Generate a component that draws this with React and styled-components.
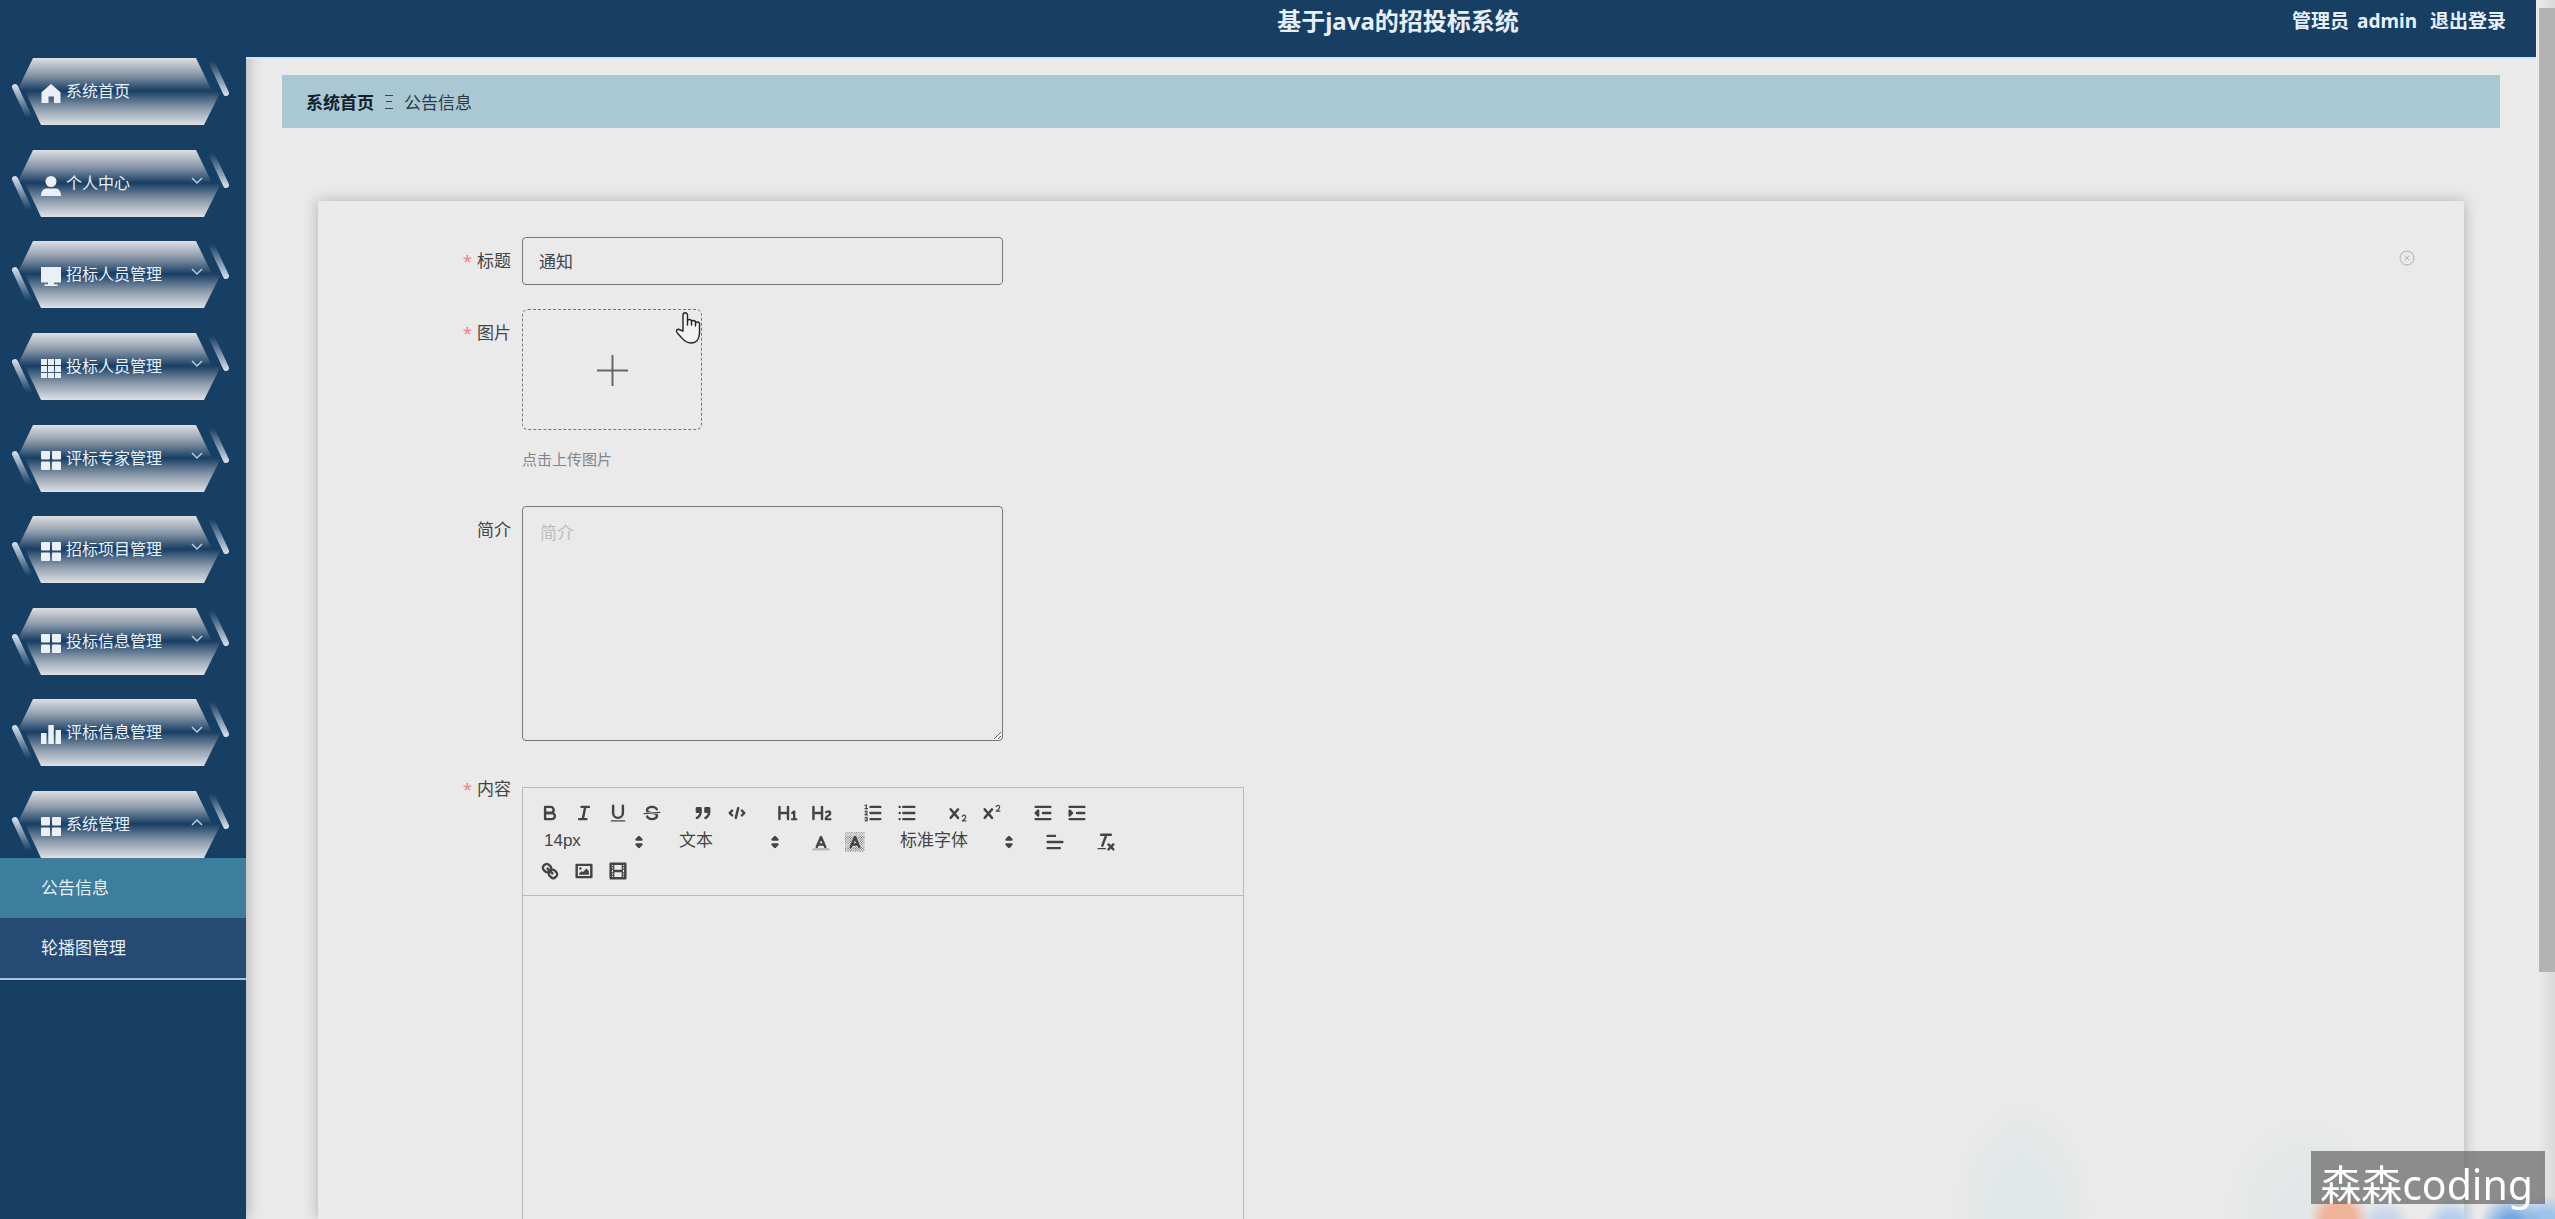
import React, { useState } from "react";
import styled, { createGlobalStyle, css } from "styled-components";

const navy = "#173e63";
const paper = "#eaeaea";
const ink = "#444";
const sans = `"Noto Sans", "Noto Sans CJK SC", sans-serif`;

const GlobalStyle = createGlobalStyle`
  *, *::before, *::after { box-sizing: border-box; }
  body { margin: 0; background: ${paper}; font-family: ${sans}; color: ${ink}; }
  button, input, textarea, select { font: inherit; color: inherit; }
  button { padding: 0; border: 0; background: none; cursor: pointer; }
`;

/* ---------- frame ---------- */

const Shell = styled.div`
  display: flex;
  height: 100vh;
  overflow: hidden;
`;

const Sidebar = styled.aside`
  flex: none;
  width: 246px;
  padding-top: 57px;
  background: ${navy};
  box-shadow: 0 0 16px rgba(0, 0, 0, 0.3);
  z-index: 1;
`;

const Page = styled.div`
  flex: 1;
  min-width: 0;
  display: flex;
  flex-direction: column;
`;

const Header = styled.header`
  flex: none;
  position: relative;
  z-index: 2;
  display: grid;
  grid-template-columns: 1fr auto 1fr;
  align-items: start;
  height: 59px;
  padding: 3px 30px 0 44px;
  border-bottom: 2px solid #d5e5f6;
  background: ${navy};
  color: #e6effa;
`;

const SiteTitle = styled.h1`
  grid-column: 2;
  margin: 0;
  font-size: 24px;
  line-height: 36px;
  font-weight: 700;
`;

const Account = styled.div`
  display: flex;
  justify-content: flex-end;
  font-size: 19px;
  line-height: 36px;
  font-weight: 700;
`;

const UserName = styled.span`
  margin: 0 13px 0 8px;
`;

const LogoutLink = styled.a`
  color: inherit;
  text-decoration: none;
`;

const Rail = styled.div`
  flex: none;
  width: 19px;
  padding: 8px 0 0 3px;
  background: linear-gradient(90deg, #ececec, #dadada);
`;

const RailThumb = styled.div`
  height: calc(80% - 5px);
  background: #b3b3b3;
`;

/* ---------- sidebar menu ---------- */

const Menu = styled.nav`
  display: flex;
  flex-direction: column;
  justify-content: space-between;
  height: 801px;
`;

const MenuButton = styled.button`
  position: relative;
  display: flex;
  align-items: center;
  width: 100%;
  height: 68px;
  padding: 0 43px 0 41px;
  color: #eaf1fa;
  font-size: 16px;
  text-align: left;
`;

const Plate = styled.svg`
  position: absolute;
  inset: 0;
  width: 246px;
  height: 68px;
`;

const MenuIcon = styled.svg`
  position: relative;
  flex: none;
  width: 20px;
  height: 20px;
  margin-top: 6px;
  fill: #eaf0f6;
`;

const MenuText = styled.span`
  position: relative;
  flex: 1;
  padding: 0 0 0 5px;
  line-height: 24px;
`;

const Chevron = styled.svg`
  position: relative;
  flex: none;
  width: 12px;
  height: 8px;
  margin-bottom: 4px;
  fill: none;
  stroke: #b9cbe0;
  stroke-width: 1.5;
  transform: ${(p) => (p.$open ? "rotate(180deg)" : "none")};
`;

const SubMenu = styled.div`
  display: flex;
  flex-direction: column;
  border-bottom: 2px solid #a9c3dc;
`;

const SubLink = styled.a`
  height: 60px;
  padding-left: 41px;
  background: ${(p) => (p.$active ? "#3d7d9d" : "#254b75")};
  color: #e8f0f8;
  font-size: 17px;
  line-height: 60px;
  text-decoration: none;
`;

/* ---------- content ---------- */

const Main = styled.main`
  flex: 1;
  display: flex;
  flex-direction: column;
  min-height: 0;
  padding: 16px 36px 0;
`;

const Crumbs = styled.nav`
  flex: none;
  display: flex;
  align-items: center;
  gap: 11px;
  height: 53px;
  padding: 0 24px;
  background: #a9c8d4;
  color: #2c3a44;
  font-size: 17px;
`;

const CrumbLink = styled.a`
  color: #10202c;
  font-weight: 700;
  text-decoration: none;
`;

const CrumbMark = styled.svg`
  width: 8px;
  height: 14px;
  stroke: #34444e;
  stroke-width: 1;
`;

const Card = styled.form`
  flex: 1;
  display: flex;
  flex-direction: column;
  gap: 24px;
  min-height: 0;
  margin: 73px 36px 0;
  padding: 36px 49px 0 0;
  background: ${paper};
  box-shadow: 0 0 14px rgba(0, 0, 0, 0.25);
`;

const Row = styled.div`
  display: flex;
  align-items: flex-start;
  flex: ${(p) => (p.$grow ? "1" : "none")};
  min-height: 0;
`;

const Label = styled.label`
  flex: none;
  width: 204px;
  padding-right: 11px;
  font-size: 17px;
  line-height: 48px;
  text-align: right;
  ${(p) =>
    p.$required &&
    css`
      &::before {
        content: "*";
        margin-right: 5px;
        color: #f07f8c;
      }
    `}
`;

const fieldBox = css`
  display: block;
  width: 481px;
  border: 1px solid #777;
  border-radius: 4px;
  background: transparent;
  outline: none;
  font-size: 17px;
`;

const TextField = styled.input`
  ${fieldBox}
  height: 48px;
  padding: 0 16px 2px;
`;

const TextArea = styled.textarea`
  ${fieldBox}
  height: 235px;
  padding: 14px 17px;
  line-height: 24px;
  resize: both;
  &::placeholder { color: #bdbdbd; }
`;

const ClearButton = styled.button`
  display: flex;
  margin: 13px 0 0 auto;
  svg { width: 16px; height: 16px; fill: none; stroke: #b0b0b0; }
`;

const UploadButton = styled.button`
  position: relative;
  display: flex;
  align-items: center;
  justify-content: center;
  width: 180px;
  height: 121px;
  padding-top: 2px;
  border: 1px dashed #777;
  border-radius: 6px;
`;

const PlusIcon = styled.svg`
  width: 31px;
  height: 31px;
  stroke: #666;
  stroke-width: 2;
`;

const HandPointer = styled.svg`
  position: absolute;
  left: 152px;
  top: 1px;
  width: 26px;
  height: 34px;
  fill: #f2f2f2;
  stroke: #222;
  stroke-width: 1.4;
  stroke-linejoin: round;
  stroke-linecap: round;
`;

const Hint = styled.p`
  margin: 15px 0 9px;
  color: #85858c;
  font-size: 15px;
  line-height: 28px;
`;

/* ---------- rich text editor ---------- */

const Editor = styled.div`
  align-self: stretch;
  display: flex;
  flex-direction: column;
  width: 722px;
  margin-top: 22px;
  border: 1px solid #bcbcbc;
  border-bottom: 0;
`;

const Toolbar = styled.div`
  display: flex;
  flex-wrap: wrap;
  padding: 10px;
  border-bottom: 1px solid #bcbcbc;
`;

const ToolGroup = styled.div`
  display: flex;
  height: 29px;
  margin-right: 17px;
`;

const ToolButton = styled.button`
  display: flex;
  align-items: center;
  justify-content: center;
  width: 34px;
  height: 29px;
`;

const Glyph = styled.svg`
  width: 22px;
  height: 22px;
  fill: none;
  stroke: ${ink};
  stroke-width: 2;
  stroke-linecap: round;
  stroke-linejoin: round;
  .thin { stroke-width: 1; }
  .fill { fill: ${ink}; stroke: none; }
  .both { fill: ${ink}; }
  .faint { stroke: #bbb; }
`;

const Picker = styled.div`
  position: relative;
  width: ${(p) => p.$width}px;
  height: 29px;
  svg {
    position: absolute;
    right: 1px;
    top: 4px;
    pointer-events: none;
  }
`;

const PickerSelect = styled.select`
  width: 100%;
  height: 27px;
  padding: 0 0 0 11px;
  border: 0;
  background: transparent;
  appearance: none;
  outline: none;
  font-family: "Liberation Sans", "Noto Sans CJK SC", sans-serif;
  font-size: 17px;
  line-height: 27px;
`;

const Writing = styled.div`
  flex: 1;
  min-height: 240px;
  padding: 14px 18px;
  outline: none;
`;

/* ---------- overlays ---------- */

const DockGlow = styled.div`
  position: fixed;
  right: 0;
  bottom: 0;
  width: 660px;
  height: 130px;
  z-index: 3;
  pointer-events: none;
  background:
    radial-gradient(circle 30px at 444px 130px, #efb39a 50%, transparent),
    radial-gradient(circle 26px at 490px 136px, #c8d5ea 40%, transparent),
    radial-gradient(circle 26px at 556px 136px, #b5cfec 40%, transparent),
    radial-gradient(circle 32px at 616px 136px, #74a9e2 30%, transparent),
    radial-gradient(circle 28px at 650px 134px, #9cc3ec 40%, transparent),
    radial-gradient(ellipse 70px 116px at 128px 130px, #e2e7e7 55%, transparent),
    radial-gradient(ellipse 80px 100px at 410px 130px, #e3e7e7 40%, transparent);
`;

const Watermark = styled.div`
  position: fixed;
  right: 10px;
  bottom: 15px;
  z-index: 4;
  height: 53px;
  padding: 5px 12px 0 9px;
  background: rgba(100, 100, 100, 0.7);
  color: #fff;
  font-size: 41px;
  line-height: 56px;
  white-space: nowrap;
`;

/* ---------- drawings ---------- */

const menuIcons = {
  home: <path d="M10 0 19.5 8.3V19H13v-6.5H7.500V19H.5V8.300Z" />,
  user: (
    <>
      <circle cx="10" cy="5.500" r="5.500" />
      <path d="M0 20c0-5 2.500-7.500 5.500-7.500h9C17.500 12.500 20 15 20 20Z" />
    </>
  ),
  monitor: <path d="M0 0h20v15.500h-7v1.800h3.500V19h-13v-1.700H7v-1.800H0Z" />,
  grid9: (
    <path d="M0 0h6v6H0ZM7 0h6v6H7ZM14 0h6v6h-6ZM0 7h6v6H0ZM7 7h6v6H7ZM14 7h6v6h-6ZM0 14h6v5H0ZM7 14h6v5H7ZM14 14h6v5h-6Z" />
  ),
  grid4: (
    <>
      <rect width="9" height="8.500" rx="1" />
      <rect x="11" width="9" height="8.500" rx="1" />
      <rect y="10.500" width="9" height="8.500" rx="1" />
      <rect x="11" y="10.500" width="9" height="8.500" rx="1" />
    </>
  ),
  bars: <path d="M0 8h5.500v11H0ZM7.300 0h5.500v19H7.300ZM14.500 5H20v14h-5.500Z" />,
};

function PlateArt() {
  return (
    <Plate viewBox="0 0 246 68" aria-hidden="true">
      <path d="M33 1H196L212 34H17Z" fill="url(#plateTop)" />
      <path d="M25 34H221L204 68H41Z" fill="url(#plateBottom)" />
      <path d="M15 30 29 60" stroke="url(#slashLeft)" strokeWidth="6" strokeLinecap="round" />
      <path d="M212 6 226 36" stroke="url(#slashRight)" strokeWidth="6" strokeLinecap="round" />
    </Plate>
  );
}

function PlateDefs() {
  return (
    <svg width="0" height="0" style={{ position: "absolute" }} aria-hidden="true">
      <defs>
        <linearGradient id="plateTop" gradientUnits="userSpaceOnUse" x1="0" y1="1" x2="0" y2="34">
          <stop offset="0" stopColor="#dfdfe2" />
          <stop offset="0.5" stopColor="#8a99aa" />
          <stop offset="1" stopColor={navy} />
        </linearGradient>
        <linearGradient id="plateBottom" gradientUnits="userSpaceOnUse" x1="0" y1="34" x2="0" y2="68">
          <stop offset="0" stopColor={navy} />
          <stop offset="0.5" stopColor="#8a99aa" />
          <stop offset="1" stopColor="#dfe1e6" />
        </linearGradient>
        <linearGradient id="slashLeft" gradientUnits="userSpaceOnUse" x1="0" y1="28" x2="0" y2="61">
          <stop offset="0" stopColor="#d3deea" />
          <stop offset="1" stopColor={navy} />
        </linearGradient>
        <linearGradient id="slashRight" gradientUnits="userSpaceOnUse" x1="0" y1="4" x2="0" y2="38">
          <stop offset="0" stopColor={navy} />
          <stop offset="1" stopColor="#d3deea" />
        </linearGradient>
      </defs>
    </svg>
  );
}

const crossX =
  "M9.65,5.241a1,1,0,0,0-1.409.108L6,7.964,3.759,5.349A1,1,0,0,0,2.192,6.592Q2.215,6.621,2.241,6.649L4.684,9.5,2.241,12.35A1,1,0,0,0,3.71,13.707q0.026-.028.049-0.057L6,11.036,8.241,13.65a1,1,0,1,0,1.567-1.243Q9.785,12.378,9.759,12.35L7.316,9.5,9.759,6.651A1,1,0,0,0,9.65,5.241Z";

const checker = [];
for (let y = 1; y < 17; y += 1) {
  for (let x = 1; x < 17; x += 2) {
    checker.push(`M${x + (y % 2)} ${y}h.7v.7h-.7Z`);
  }
}

const glyphs = {
  bold: (
    <>
      <path d="M5,4H9.5A2.5,2.5,0,0,1,12,6.5v0A2.5,2.5,0,0,1,9.5,9H5V4Z" />
      <path d="M5,9h5.5A2.5,2.5,0,0,1,13,11.5v0A2.5,2.5,0,0,1,10.5,14H5V9Z" />
    </>
  ),
  italic: <path d="M7 4H13M5 14H11M8 14 10 4" />,
  underline: (
    <>
      <path d="M5,3V9a4.012,4.012,0,0,0,4,4H9a4.012,4.012,0,0,0,4-4V3" />
      <rect className="fill" height="1" rx="0.5" width="12" x="3" y="15" />
    </>
  ),
  strike: (
    <>
      <path className="thin" d="M15.5 8.500 2.500 9.500" />
      <path className="fill" d="M9.007,8C6.542,7.791,6,7.519,6,6.5,6,5.792,7.283,5,9,5c1.571,0,2.765.679,2.969,1.309a1,1,0,0,0,1.9-.617C13.356,4.106,11.354,3,9,3,6.2,3,4,4.538,4,6.5a3.2,3.2,0,0,0,.5,1.843Z" />
      <path className="fill" d="M8.984,10C11.457,10.208,12,10.479,12,11.5c0,0.708-1.283,1.5-3,1.5-1.571,0-2.765-.679-2.969-1.309a1,1,0,1,0-1.9.617C4.644,13.894,6.646,15,9,15c2.8,0,5-1.538,5-3.5a3.2,3.2,0,0,0-.5-1.843Z" />
    </>
  ),
  quote: (
    <>
      <rect className="both" height="3" width="3" x="4" y="5" />
      <rect className="both" height="3" width="3" x="11" y="5" />
      <path className="both" d="M7,8c0,4.031-3,5-3,5" />
      <path className="both" d="M14,8c0,4.031-3,5-3,5" />
    </>
  ),
  code: <path d="M5 7 3 9 5 11M13 7 15 9 13 11M10 5 8 13" />,
  h1: (
    <path className="fill" d="M10,4V14a1,1,0,0,1-2,0V10H3v4a1,1,0,0,1-2,0V4A1,1,0,0,1,3,4V8H8V4a1,1,0,0,1,2,0Zm6.06787,9.209H14.98975V7.59863a.54085.54085,0,0,0-.605-.60547h-.62744a1.01119,1.01119,0,0,0-.748.29688L11.645,8.56641a.5435.5435,0,0,0-.022.8584l.28613.30762a.53861.53861,0,0,0,.84717.0332l.09912-.08789a1.2137,1.2137,0,0,0,.2417-.35254h.02246s-.01123.30859-.01123.60547V13.209H12.041a.54085.54085,0,0,0-.605.60547v.43945a.54085.54085,0,0,0,.605.60547h4.02686a.54085.54085,0,0,0,.605-.60547v-.43945A.54085.54085,0,0,0,16.06787,13.209Z" />
  ),
  h2: (
    <path className="fill" d="M16.73975,13.81445v.43945a.54085.54085,0,0,1-.605.60547H11.855a.58392.58392,0,0,1-.64893-.60547V14.0127c0-2.90527,3.39941-3.42187,3.39941-4.55469a.77675.77675,0,0,0-.84717-.78125,1.17684,1.17684,0,0,0-.83594.38477c-.2749.26367-.561.374-.85791.13184l-.4292-.34082c-.30811-.24219-.38525-.51758-.1543-.81445a2.97155,2.97155,0,0,1,2.45361-1.17676,2.45393,2.45393,0,0,1,2.68408,2.40918c0,2.45312-3.1792,2.92676-3.27832,3.93848h2.79443A.54085.54085,0,0,1,16.73975,13.81445ZM9,3A.99974.99974,0,0,0,8,4V8H3V4A1,1,0,0,0,1,4V14a1,1,0,0,0,2,0V10H8v4a1,1,0,0,0,2,0V4A.99974.99974,0,0,0,9,3Z" />
  ),
  ordered: (
    <>
      <path d="M7 4H15M7 9H15M7 14H15" />
      <path className="thin" d="M2.500 5.500H4.500M4.5,10.5h-2c0-.234,1.85-1.076,1.85-2.234A0.959,0.959,0,0,0,2.5,8.156M2.5,14.846a0.959,0.959,0,0,0,1.85-.109A0.7,0.7,0,0,0,3.75,14a0.688,0.688,0,0,0,.6-0.736,0.959,0.959,0,0,0-1.85-.109" />
      <path className="fill" d="M3.5,6A0.5,0.5,0,0,1,3,5.5V3.085l-0.276.138A0.5,0.5,0,0,1,2.053,3c-0.124-.247-0.023-0.324.224-0.447l1-.5A0.5,0.5,0,0,1,4,2.5v3A0.5,0.5,0,0,1,3.5,6Z" />
    </>
  ),
  bullet: <path d="M6 4H15M6 9H15M6 14H15M3 4H3M3 9H3M3 14H3" />,
  sub: (
    <>
      <path className="fill" d="M15.5,15H13.861a3.858,3.858,0,0,0,1.914-2.975,1.8,1.8,0,0,0-1.6-1.751A1.921,1.921,0,0,0,12.021,11.7a0.5,0.5,0,1,0,.957.291h0a0.914,0.914,0,0,1,1.053-.725,0.81,0.81,0,0,1,.744.762c0,1.076-1.17,1.87-1.94,2.431A1.456,1.456,0,0,0,12,15.5a0.5,0.5,0,0,0,.5.5h3A0.5,0.5,0,0,0,15.5,15Z" />
      <path className="fill" d={crossX} />
    </>
  ),
  sup: (
    <>
      <path className="fill" d="M15.5,7H13.861a4.015,4.015,0,0,0,1.914-2.975,1.8,1.8,0,0,0-1.6-1.751A1.922,1.922,0,0,0,12.021,3.7a0.5,0.5,0,1,0,.957.291,0.917,0.917,0,0,1,1.053-.725,0.81,0.81,0,0,1,.744.762c0,1.077-1.164,1.925-1.934,2.486A1.423,1.423,0,0,0,12,7.5a0.5,0.5,0,0,0,.5.5h3A0.5,0.5,0,0,0,15.5,7Z" />
      <path className="fill" d={crossX} />
    </>
  ),
  outdent: (
    <>
      <path d="M3 14H15M3 4H15M9 9H15" />
      <path className="both" d="M5 7V11L3 9Z" />
    </>
  ),
  indent: (
    <>
      <path d="M3 14H15M3 4H15M9 9H15" />
      <path className="both" d="M3 7V11L5 9Z" />
    </>
  ),
  color: (
    <>
      <path className="faint" d="M3 15H15" />
      <path d="M5.500 13 9 5 12.500 13M11.630 11H6.380" />
    </>
  ),
  background: (
    <>
      <path className="fill" d={checker.join("")} />
      <path d="M5.500 13 9 5 12.500 13M11.630 11H6.380" />
    </>
  ),
  align: <path d="M3 9H15M3 14H13M3 4H9" />,
  clean: (
    <>
      <path d="M5 3H13M6 12 9.350 3M11 11 15 15M15 11 11 15" />
      <rect className="fill" height="1" rx="0.5" width="7" x="2" y="14" />
    </>
  ),
  link: (
    <>
      <path d="M7 7 11 11" />
      <path d="M8.9,4.577a3.476,3.476,0,0,1,.36,4.679A3.476,3.476,0,0,1,4.577,8.9C3.185,7.5,2.035,6.4,4.217,4.217S7.5,3.185,8.9,4.577Z" />
      <path d="M13.423,9.1a3.476,3.476,0,0,0-4.679-.36,3.476,3.476,0,0,0,.36,4.679c1.392,1.392,2.5,2.542,4.679.36S14.815,10.5,13.423,9.1Z" />
    </>
  ),
  image: (
    <>
      <rect height="10" width="12" x="3" y="4" />
      <circle className="fill" cx="6" cy="7" r="1" />
      <path className="fill" d="M5 12V11L7 9 8 10 11 7 13 9V12Z" />
    </>
  ),
  video: (
    <>
      <rect height="12" width="12" x="3" y="3" />
      <path className="fill" d="M5 3h1v12H5ZM12 3h1v12h-1ZM5 8h8v2H5ZM3 5h3v1H3ZM3 7h3v1H3ZM3 10h3v1H3ZM3 12h3v1H3ZM12 5h3v1h-3ZM12 7h3v1h-3ZM12 10h3v1h-3ZM12 12h3v1h-3Z" />
    </>
  ),
  updown: (
    <>
      <path className="both" d="M7 11 9 13 11 11Z" />
      <path className="both" d="M7 7 9 5 11 7Z" />
    </>
  ),
};

/* ---------- data ---------- */

const menu = [
  { text: "系统首页", icon: "home" },
  { text: "个人中心", icon: "user", nested: true },
  { text: "招标人员管理", icon: "monitor", nested: true },
  { text: "投标人员管理", icon: "grid9", nested: true },
  { text: "评标专家管理", icon: "grid4", nested: true },
  { text: "招标项目管理", icon: "grid4", nested: true },
  { text: "投标信息管理", icon: "grid4", nested: true },
  { text: "评标信息管理", icon: "bars", nested: true },
  { text: "系统管理", icon: "grid4", nested: true, open: true },
];

const toolGroups = [
  { tools: ["bold", "italic", "underline", "strike"] },
  { tools: ["quote", "code"] },
  { tools: ["h1", "h2"] },
  { tools: ["ordered", "bullet"] },
  { tools: ["sub", "sup"] },
  { tools: ["outdent", "indent"] },
  { picker: "14px", name: "size", width: 118 },
  { picker: "文本", name: "header", width: 119 },
  { tools: ["color", "background"] },
  { picker: "标准字体", name: "font", width: 132 },
  { tools: ["align"] },
  { tools: ["clean"] },
  { tools: ["link", "image", "video"] },
];

function Tool({ name }) {
  return (
    <ToolButton type="button" aria-label={name}>
      <Glyph viewBox="0 0 18 18">{glyphs[name]}</Glyph>
    </ToolButton>
  );
}

function RichEditor() {
  return (
    <Editor>
      <Toolbar role="toolbar">
        {toolGroups.map((group, i) => (
          <ToolGroup key={i}>
            {group.tools?.map((name) => <Tool key={name} name={name} />)}
            {group.picker && (
              <Picker $width={group.width}>
                <PickerSelect aria-label={group.name}>
                  <option>{group.picker}</option>
                </PickerSelect>
                <Glyph viewBox="0 0 18 18">{glyphs.updown}</Glyph>
              </Picker>
            )}
          </ToolGroup>
        ))}
      </Toolbar>
      <Writing contentEditable suppressContentEditableWarning role="textbox" aria-labelledby="content-label" />
    </Editor>
  );
}

export default function App() {
  const [title, setTitle] = useState("通知");

  return (
    <>
      <GlobalStyle />
      <PlateDefs />
      <Shell>
        <Sidebar>
          <Menu>
            {menu.map((item) => (
              <MenuButton key={item.text} type="button">
                <PlateArt />
                <MenuIcon viewBox="0 0 20 20">{menuIcons[item.icon]}</MenuIcon>
                <MenuText>{item.text}</MenuText>
                {item.nested && (
                  <Chevron viewBox="0 0 12 8" $open={item.open}>
                    <path d="M1 1 6 6 11 1" />
                  </Chevron>
                )}
              </MenuButton>
            ))}
          </Menu>
          <SubMenu>
            <SubLink href="#notice" $active>公告信息</SubLink>
            <SubLink href="#carousel">轮播图管理</SubLink>
          </SubMenu>
        </Sidebar>

        <Page>
          <Header>
            <SiteTitle>基于java的招投标系统</SiteTitle>
            <Account>
              <span>管理员</span>
              <UserName>admin</UserName>
              <LogoutLink href="#logout">退出登录</LogoutLink>
            </Account>
          </Header>

          <Main>
            <Crumbs>
              <CrumbLink href="#home">系统首页</CrumbLink>
              <CrumbMark viewBox="0 0 8 14">
                <path d="M0 0.500H8M1 6.500H7M0 13.500H8" />
              </CrumbMark>
              <span>公告信息</span>
            </Crumbs>

            <Card>
              <Row>
                <Label htmlFor="title" $required>标题</Label>
                <TextField id="title" value={title} onChange={(e) => setTitle(e.target.value)} />
                <ClearButton type="button" aria-label="clear" onClick={() => setTitle("")}>
                  <svg viewBox="0 0 16 16">
                    <circle cx="8" cy="8" r="7" />
                    <path d="M5.500 5.500 10.500 10.500M10.500 5.500 5.500 10.500" />
                  </svg>
                </ClearButton>
              </Row>

              <Row>
                <Label htmlFor="picture" $required>图片</Label>
                <div>
                  <UploadButton id="picture" type="button">
                    <PlusIcon viewBox="0 0 31 31">
                      <path d="M15.500 0V31M0 15.500H31" />
                    </PlusIcon>
                    <HandPointer viewBox="0 0 26 34">
                      <path d="M8 20V4a2 2 0 0 1 4.500 0v10V10.500a2 2 0 0 1 4 0V14v-2.500a2 2 0 0 1 4 0V15v-2a2 2 0 0 1 4 0v9c0 6-3 10-8.500 10C10 32 8 28 5 25 3 23 1 21 1.500 19.500S4 18 5 19Z" />
                    </HandPointer>
                  </UploadButton>
                  <Hint>点击上传图片</Hint>
                </div>
              </Row>

              <Row>
                <Label htmlFor="intro">简介</Label>
                <TextArea id="intro" placeholder="简介" />
              </Row>

              <Row $grow>
                <Label as="span" id="content-label" $required>内容</Label>
                <RichEditor />
              </Row>
            </Card>
          </Main>
        </Page>

        <Rail aria-hidden="true">
          <RailThumb />
        </Rail>
      </Shell>
      <DockGlow />
      <Watermark>森森coding</Watermark>
    </>
  );
}
